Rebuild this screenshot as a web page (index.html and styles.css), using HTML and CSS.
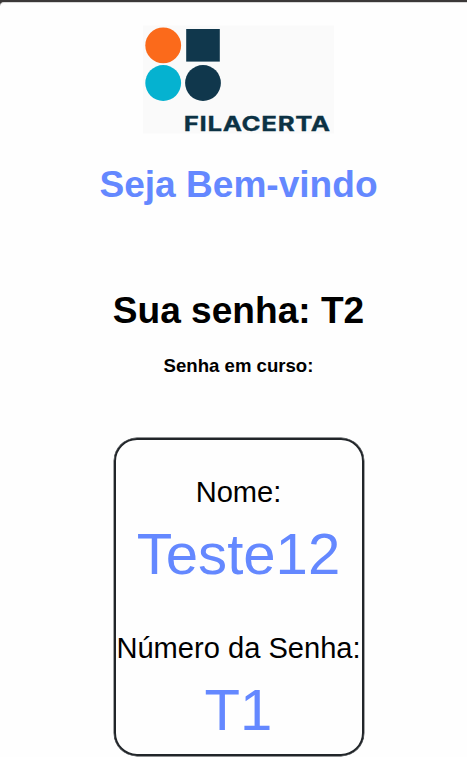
FILE: index.html
```html
<!DOCTYPE html>
<html lang="pt-BR">
<head>
<meta charset="utf-8">
<title>FilaCerta</title>
<link rel="stylesheet" href="styles.css">
</head>
<body>
<main class="page">
  <svg class="logo" viewBox="0 0 191 108" role="img" aria-label="FilaCerta">
    <rect y="-.5" width="191" height="108" fill="#fafafa"/>
    <circle cx="20.2" cy="19.4" r="17.9" fill="#fb6a1b"/>
    <rect x="43.2" y="3" width="33.6" height="32.6" fill="#10374c"/>
    <circle cx="20.2" cy="57" r="17.9" fill="#05b2d0"/>
    <circle cx="60" cy="57" r="17.9" fill="#10374c"/>
    <text class="brand" x="40.8" y="104.7" textLength="147" lengthAdjust="spacingAndGlyphs">FILACERTA</text>
  </svg>
  <h1 class="welcome">Seja Bem-vindo</h1>
  <h1 class="ticket">Sua senha: T2</h1>
  <h3 class="current">Senha em curso:</h3>
  <section class="card">
    <div class="label">Nome:</div>
    <div class="value">Teste12</div>
    <div class="label second">Número da Senha:</div>
    <div class="value">T1</div>
  </section>
</main>
</body>
</html>
```
FILE: styles.css
```css
* { box-sizing: border-box; }
html { background: #3b3838; }
body {
  margin: 0;
  padding-top: 2px;
  height: 757px;
  overflow: hidden;
  font-family: "Liberation Sans", Arial, sans-serif;
  color: #000;
}
.page {
  display: flex;
  flex-direction: column;
  align-items: center;
  height: 755px;
  padding: 23px 0 0 10px;
  background: #fefefe;
  border-top: 1px solid #d8d8d8;
  border-top-left-radius: 4px;
}
.logo { display: block; flex: none; width: 191px; height: 108px; overflow: visible; }
.brand {
  font-family: Inter, sans-serif;
  font-weight: 700;
  font-size: 19.8px;
  letter-spacing: .5px;
  fill: #0c3244;
  stroke: #0c3244;
  stroke-width: .3px;
}
h1, h3 { margin: 0; white-space: nowrap; }
h1 { font-size: 37.1px; line-height: 42px; }
.welcome { margin-top: 29px; color: #6488ff; }
.ticket { margin-top: 84px; }
.current { margin-top: 24px; font-size: 18.6px; line-height: 22px; }
.card {
  flex: none;
  width: 250px;
  height: 318px;
  margin-top: 61px;
  padding-top: 35px;
  border: 2px solid #212529;
  border-radius: 23px;
  box-shadow: 0 0 0 .4px #212529;
  text-align: center;
  white-space: nowrap;
}
.label { font-size: 29.1px; line-height: 34px; }
.second { margin-top: 44px; }
.value { margin-top: 12px; font-size: 58.1px; line-height: 66px; color: #6488ff; }
```
